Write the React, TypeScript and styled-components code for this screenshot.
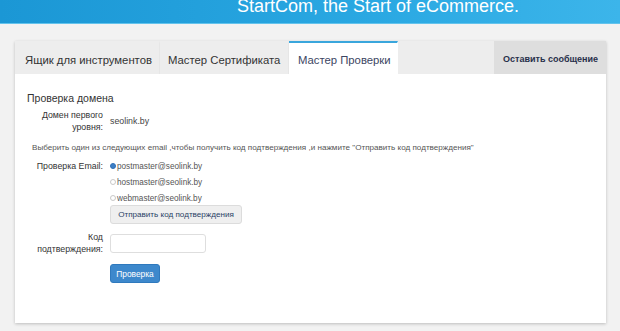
import React from "react";
import styled, { createGlobalStyle } from "styled-components";

const Global = createGlobalStyle`
  html, body { margin: 0; padding: 0; background: #f2f2f2; }
  body { font-family: "Liberation Sans", Arial, sans-serif; color: #333; }
`;

const Page = styled.div`
  width: 620px;
  height: 331px;
  overflow: hidden;
  background: #f2f2f2;
`;

const Header = styled.header`
  height: 24px;
  overflow: hidden;
  background: linear-gradient(90deg, #1b97d5 0%, #2aa8e2 60%, #3cb5ea 100%);
  border-bottom: 1px solid #63c3ec;
  box-sizing: border-box;
  padding-left: 237px;
`;

const HeaderTitle = styled.div`
  margin-top: -3px;
  font-size: 18px;
  line-height: 18px;
  color: #ffffff;
  white-space: nowrap;
`;

const Card = styled.section`
  margin: 17px 14px 0 15px;
  height: 282px;
  background: #ffffff;
  box-shadow: 0 1px 3px rgba(0, 0, 0, 0.22);
  display: flex;
  flex-direction: column;
`;

const Tabs = styled.nav`
  display: flex;
  height: 33px;
  background: #ededed;
`;

const Tab = styled.div<{ $active?: boolean; $w: number; $pl: number }>`
  display: flex;
  align-items: center;
  box-sizing: border-box;
  width: ${(p) => p.$w}px;
  padding: 3px 0 0 ${(p) => p.$pl}px;
  font-size: 11.3px;
  color: ${(p) => (p.$active ? "#3c4663" : "#333")};
  background: ${(p) => (p.$active ? "#ffffff" : "#ededed")};
  border-top: 2px solid ${(p) => (p.$active ? "#3aa6dc" : "transparent")};
  border-right: 1px solid ${(p) => (p.$active ? "transparent" : "#e6e6e6")};
  white-space: nowrap;
`;

const Spacer = styled.div`
  flex: 1;
`;

const MessageTab = styled.div`
  display: flex;
  align-items: center;
  padding: 3px 0 0 9px;
  width: 112px;
  box-sizing: border-box;
  background: #dedede;
  font-size: 9px;
  font-weight: bold;
  color: #28304b;
  white-space: nowrap;
`;

const Body = styled.div`
  padding: 17px 0 0 12px;
  display: flex;
  flex-direction: column;
`;

const SectionTitle = styled.h3`
  margin: 0 0 4px 0;
  font-size: 10.5px;
  font-weight: normal;
  line-height: 14px;
  color: #333;
`;

const Row = styled.div<{ $mb?: number }>`
  display: grid;
  grid-template-columns: 76px auto;
  column-gap: 7px;
  margin-bottom: ${(p) => p.$mb ?? 0}px;
  align-items: start;
`;

const Label = styled.div<{ $lh?: number }>`
  text-align: right;
  font-size: 8.8px;
  line-height: ${(p) => p.$lh ?? 12}px;
  color: #333;
`;

const Value = styled.div`
  font-size: 8.8px;
  line-height: 24px;
  color: #444;
`;

const Hint = styled.p`
  margin: 0 0 4px 5px;
  font-size: 8.1px;
  line-height: 12px;
  color: #555;
  white-space: nowrap;
`;

const RadioList = styled.div`
  display: flex;
  flex-direction: column;
`;

const RadioRow = styled.label`
  display: flex;
  align-items: center;
  height: 16px;
  font-size: 8.2px;
  color: #555;
`;

const RadioDot = styled.span<{ $on?: boolean }>`
  width: 6px;
  height: 6px;
  border-radius: 50%;
  box-sizing: border-box;
  border: 1px solid ${(p) => (p.$on ? "#2f6fb6" : "#c8c8c8")};
  background: ${(p) => (p.$on ? "#3d7fc6" : "#fff")};
  margin-right: 1px;
  flex: none;
`;

const GrayButton = styled.button`
  margin-top: -1px;
  width: 132px;
  height: 19px;
  padding: 0;
  border: 1px solid #dcdcdc;
  border-radius: 3px;
  background: #efefef;
  font-family: inherit;
  font-size: 8.1px;
  color: #2a3f66;
  white-space: nowrap;
`;

const Input = styled.input`
  width: 96px;
  height: 19px;
  box-sizing: border-box;
  border: 1px solid #dedede;
  border-radius: 3px;
  background: #fff;
  margin: 3px 0 0 0;
`;

const PrimaryButton = styled.button`
  width: 50px;
  height: 19px;
  padding: 0;
  border: 1px solid #2f79bd;
  border-radius: 3px;
  background: #3d88cc;
  color: #ffffff;
  font-family: inherit;
  font-size: 8.4px;
`;

export default function App() {
  return (
    <Page>
      <Global />
      <Header>
        <HeaderTitle>StartCom, the Start of eCommerce.</HeaderTitle>
      </Header>
      <Card>
        <Tabs>
          <Tab $w={145} $pl={10}>Ящик для инструментов</Tab>
          <Tab $w={129} $pl={8}>Мастер Сертификата</Tab>
          <Tab $active $w={109} $pl={9}>Мастер Проверки</Tab>
          <Spacer />
          <MessageTab>Оставить сообщение</MessageTab>
        </Tabs>
        <Body>
          <SectionTitle>Проверка домена</SectionTitle>
          <Row $mb={9}>
            <Label>
              Домен первого
              <br />
              уровня:
            </Label>
            <Value>seolink.by</Value>
          </Row>
          <Hint>
            Выберить один из следующих email ,чтобы получить код подтверждения ,и нажмите "Отправить код подтверждения"
          </Hint>
          <Row $mb={7}>
            <Label $lh={16}>Проверка Email:</Label>
            <RadioList>
              <RadioRow>
                <RadioDot $on />
                postmaster@seolink.by
              </RadioRow>
              <RadioRow>
                <RadioDot />
                hostmaster@seolink.by
              </RadioRow>
              <RadioRow>
                <RadioDot />
                webmaster@seolink.by
              </RadioRow>
              <GrayButton>Отправить код подтверждения</GrayButton>
            </RadioList>
          </Row>
          <Row $mb={9}>
            <Label>
              Код
              <br />
              подтверждения:
            </Label>
            <Input />
          </Row>
          <Row>
            <span />
            <PrimaryButton>Проверка</PrimaryButton>
          </Row>
        </Body>
      </Card>
    </Page>
  );
}
